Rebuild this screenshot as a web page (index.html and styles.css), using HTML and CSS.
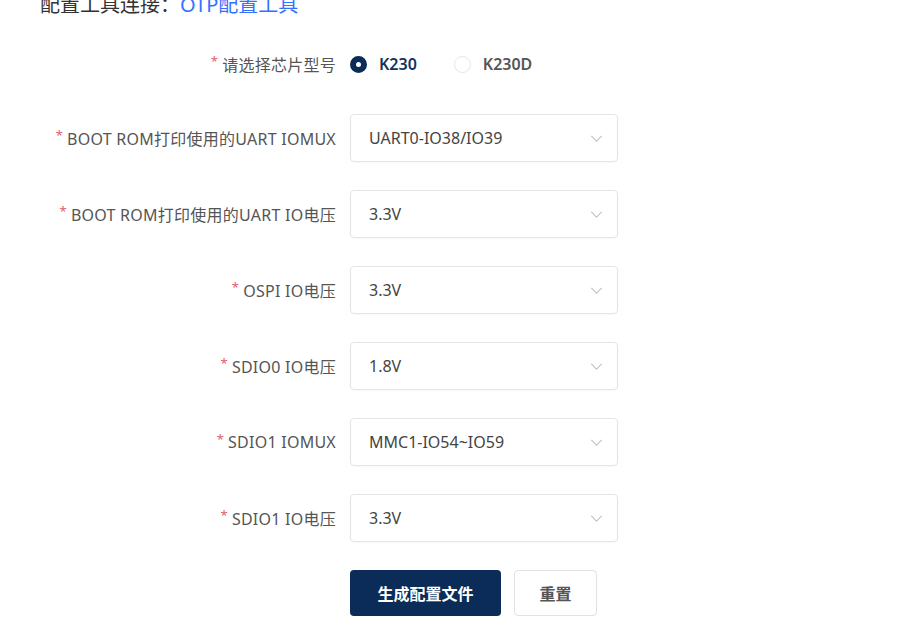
FILE: index.html
```html
<!DOCTYPE html>
<html lang="zh-CN">
<head>
<meta charset="utf-8">
<link rel="stylesheet" href="styles.css">
</head>
<body>
<p class="intro">配置工具连接：<a class="link" href="#">OTP配置工具</a></p>
<form class="form">
  <label class="label"><span class="req">*</span> 请选择芯片型号</label>
  <div class="radios">
    <span class="radio checked"><span class="dot"></span><span class="rtext">K230</span></span>
    <span class="radio"><span class="dot"></span><span class="rtext">K230D</span></span>
  </div>

  <label class="label"><span class="req">*</span> BOOT ROM打印使用的UART IOMUX</label>
  <div class="select"><span>UART0-IO38/IO39</span><svg class="chev" viewBox="0 0 14 8"><path d="M1 1l6 6 6-6"/></svg></div>

  <label class="label"><span class="req">*</span> BOOT ROM打印使用的UART IO电压</label>
  <div class="select"><span>3.3V</span><svg class="chev" viewBox="0 0 14 8"><path d="M1 1l6 6 6-6"/></svg></div>

  <label class="label"><span class="req">*</span> OSPI IO电压</label>
  <div class="select"><span>3.3V</span><svg class="chev" viewBox="0 0 14 8"><path d="M1 1l6 6 6-6"/></svg></div>

  <label class="label"><span class="req">*</span> SDIO0 IO电压</label>
  <div class="select"><span>1.8V</span><svg class="chev" viewBox="0 0 14 8"><path d="M1 1l6 6 6-6"/></svg></div>

  <label class="label"><span class="req">*</span> SDIO1 IOMUX</label>
  <div class="select"><span>MMC1-IO54~IO59</span><svg class="chev" viewBox="0 0 14 8"><path d="M1 1l6 6 6-6"/></svg></div>

  <label class="label"><span class="req">*</span> SDIO1 IO电压</label>
  <div class="select"><span>3.3V</span><svg class="chev" viewBox="0 0 14 8"><path d="M1 1l6 6 6-6"/></svg></div>

  <span></span>
  <div class="actions">
    <button type="button" class="btn primary">生成配置文件</button>
    <button type="button" class="btn plain">重置</button>
  </div>
</form>
</body>
</html>
```

FILE: styles.css
```css
html, body {
  margin: 0;
  padding: 0;
  background: #fff;
}
body {
  font-family: "Noto Sans", "Noto Sans CJK SC", sans-serif;
  width: 920px;
  height: 644px;
  overflow: hidden;
}
.intro {
  margin: -7px 0 0 40px;
  font-size: 20px;
  line-height: 24px;
  color: #333;
}
.link {
  color: #3370ff;
  text-decoration: none;
}
.form {
  margin-top: 25px;
  display: grid;
  grid-template-columns: 336px 268px;
  grid-auto-rows: 48px;
  grid-template-rows: 44px;
  column-gap: 14px;
  row-gap: 28px;
}
.label {
  display: flex;
  align-items: center;
  justify-content: flex-end;
  font-size: 16px;
  letter-spacing: 0.25px;
  color: #555;
  white-space: nowrap;
}
.req {
  color: #e0606e;
  font-size: 13px;
  margin-right: 4px;
  position: relative;
  top: -3px;
}
.radios {
  display: flex;
  align-items: center;
  gap: 37px;
}
.radio {
  display: flex;
  align-items: center;
  gap: 12px;
}
.dot {
  box-sizing: border-box;
  width: 17px;
  height: 17px;
  border-radius: 50%;
  border: 1px solid #e6e6e6;
  background: #fff;
}
.radio.checked .dot {
  border: 6px solid #0b2c58;
  background: #fff;
}
.rtext {
  font-size: 16px;
  font-weight: 600;
  color: #555;
}
.radio.checked .rtext {
  color: #12335e;
}
.select {
  box-sizing: border-box;
  height: 48px;
  border: 1px solid #e4e4e4;
  border-radius: 4px;
  display: flex;
  align-items: center;
  justify-content: space-between;
  padding: 0 14px 0 18px;
  font-size: 16px;
  color: #444;
  box-shadow: 0 1px 2px rgba(0,0,0,0.03);
}
.chev {
  width: 13px;
  height: 7px;
  fill: none;
  stroke: #c4c4c4;
  stroke-width: 1.3;
}
.actions {
  display: flex;
  gap: 13px;
  height: 46px;
}
.btn {
  height: 46px;
  border-radius: 4px;
  font-family: "Noto Sans CJK SC", sans-serif;
  font-size: 16px;
  font-weight: 700;
  cursor: pointer;
}
.primary {
  width: 151px;
  background: #0b2c58;
  color: #fff;
  border: none;
}
.plain {
  width: 83px;
  background: #fff;
  color: #555;
  border: 1px solid #e2e2e2;
}
```
